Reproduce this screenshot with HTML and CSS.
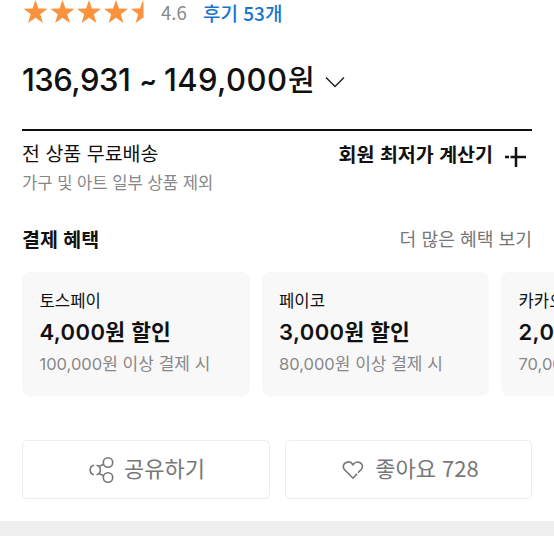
FILE: index.html
```html
<!DOCTYPE html>
<html lang="ko">
<head>
<meta charset="utf-8">
<title>상품 정보</title>
<link rel="stylesheet" href="styles.css">
</head>
<body>
<main class="product">
  <div class="rating">
    <svg class="stars" width="131" height="26" viewBox="0 0 131 26">
      <defs>
        <path id="star" d="M12 0l3 8.600 9 .2-7.200 5.500 2.600 8.700-7.400-5.200L4.600 23l2.600-8.700L0 8.800l9-.2z"/>
        <clipPath id="part"><rect x="106" y="0" width="15.500" height="26"/></clipPath>
      </defs>
      <use href="#star" x="1.500"/><use href="#star" x="28.500"/><use href="#star" x="55"/><use href="#star" x="82"/>
      <g clip-path="url(#part)"><use href="#star" x="109"/></g>
    </svg>
    <span class="score">4.6</span>
    <a class="reviews">후기 53개</a>
  </div>

  <div class="price">
    <span class="amount low">136,931</span><span class="tilde">~</span><span class="amount">149,000</span><span class="won">원</span>
    <svg class="chevron" width="20" height="12" viewBox="0 0 20 12"><path d="M1 1.500l9 9 9-9"/></svg>
  </div>

  <section class="delivery">
    <div>
      <p class="free">전 상품 무료배송</p>
      <p class="except">가구 및 아트 일부 상품 제외</p>
    </div>
    <div class="calc">
      <span>회원 최저가 계산기</span>
      <svg class="plus" width="22" height="22" viewBox="0 0 22 22"><path d="M11 1v20M0 11h4M5.500 11H21"/></svg>
    </div>
  </section>

  <div class="benefit-head">
    <h2>결제 혜택</h2>
    <a>더 많은 혜택 보기</a>
  </div>

  <div class="cards">
    <article class="card">
      <p class="pay">토스페이</p>
      <p class="discount"><span class="num">4,000</span>원 할인</p>
      <p class="condition"><span class="num">100,000</span>원 이상 결제 시</p>
    </article>
    <article class="card">
      <p class="pay">페이코</p>
      <p class="discount"><span class="num">3,000</span>원 할인</p>
      <p class="condition"><span class="num">80,000</span>원 이상 결제 시</p>
    </article>
    <article class="card">
      <p class="pay">카카오페이</p>
      <p class="discount"><span class="num">2,000</span>원 할인</p>
      <p class="condition"><span class="num">70,000</span>원 이상 결제 시</p>
    </article>
  </div>

  <div class="actions">
    <button class="share">
      <svg width="26" height="28" viewBox="0 0 26 28"><circle cx="19" cy="6.500" r="4.700"/><circle cx="19" cy="21.500" r="4.700"/><path d="M5 9.300a4.800 4.800 0 0 0 0 9.400M7.500 9.300a4.800 4.800 0 0 1 0 9.400M9.800 10.500l5-2.200M9.800 17.500l5 2.200"/></svg>
      <span>공유하기</span>
    </button>
    <button class="like">
      <svg width="22" height="20" viewBox="0 0 22 20"><path d="M16 12.700l3.300-3.500C23.500 4 15-1.200 11 4.700 7-1.200-1.500 4 2.200 9.200L11 18.200l4-4.300"/></svg>
      <span>좋아요 728</span>
    </button>
  </div>
</main>
<div class="divider"></div>
</body>
</html>
```

FILE: styles.css
```css
* { box-sizing: border-box; }
body {
  margin: 0;
  width: 554px;
  height: 554px;
  overflow: hidden;
  background: #fff;
  color: #111;
  font-family: "Noto Sans CJK KR", sans-serif;
}
p, h2 { margin: 0; white-space: nowrap; }
svg { display: block; flex: none; fill: none; }
.product { padding: 0 22px; height: 521px; overflow: hidden; }

.rating { display: flex; height: 26px; line-height: 25px; white-space: nowrap; }
.stars { fill: #fb923c; }
.score { width: 50px; padding-left: 8px; font-size: 18.500px; color: #888; }
.reviews { font-size: 19px; font-weight: 500; color: #1673cf; }

.price { display: flex; align-items: center; height: 105px; padding-top: 4px; border-bottom: 2px solid #111; white-space: nowrap; }
.amount { width: 125px; font-family: Inter, sans-serif; font-size: 31px; font-weight: 500; letter-spacing: .4px; }
.amount.low { width: 110px; letter-spacing: -.5px; }
.tilde { width: 32px; text-align: center; font-family: Lato, sans-serif; font-size: 28px; font-weight: 700; }
.won { width: 26px; padding-bottom: 3px; margin-left: -1px; font-size: 29px; font-weight: 500; }
.chevron { margin-left: 11px; margin-top: 5px; stroke: #222; stroke-width: 1.500; }

.delivery { display: flex; justify-content: space-between; height: 89px; padding-top: 8px; }
.free { font-size: 19.500px; line-height: 28px; }
.except { font-size: 16.600px; line-height: 30px; color: #888; }
.calc { display: flex; gap: 12px; height: 30px; padding-right: 5px; font-size: 19.500px; line-height: 30px; font-weight: 700; }
.plus { margin-top: 7px; stroke: #111; stroke-width: 2.500; }

.benefit-head { display: flex; justify-content: space-between; height: 52px; line-height: 37px; }
.benefit-head h2 { font-size: 19.500px; font-weight: 700; }
.benefit-head a { font-size: 18.200px; color: #777; }

.cards { display: flex; gap: 12px; margin-right: -22px; overflow: hidden; }
.card { flex: none; width: 227.500px; height: 124px; padding: 15px 17.500px; border-radius: 8px; background: #f8f8f8; }
.pay { font-size: 16.700px; line-height: 26px; }
.discount { font-size: 21.500px; line-height: 35px; font-weight: 700; }
.discount .num { font-family: Inter, sans-serif; font-weight: 600; font-size: 22px; letter-spacing: .4px; }
.condition { font-size: 17px; line-height: 25px; color: #888; }
.condition .num { font-family: Inter, sans-serif; font-weight: 400; font-size: 16.500px; }

.actions { display: grid; grid-template-columns: 248px 247px; gap: 15px; margin-top: 44px; }
button { display: flex; align-items: center; justify-content: center; height: 59px; padding: 0 0 0 2px; border: 1.500px solid #ececec; border-radius: 5px; background: #fff; color: #777; font: 22px/32px "Noto Sans CJK KR", sans-serif; }
button span { padding-bottom: 5px; }
button svg { stroke: #777; stroke-width: 1.600; }
.share { gap: 9px; }
.like { gap: 11px; padding-left: 4px; }
.like svg { margin-top: 1px; }
.divider { height: 15px; background: #efefef; }
```
